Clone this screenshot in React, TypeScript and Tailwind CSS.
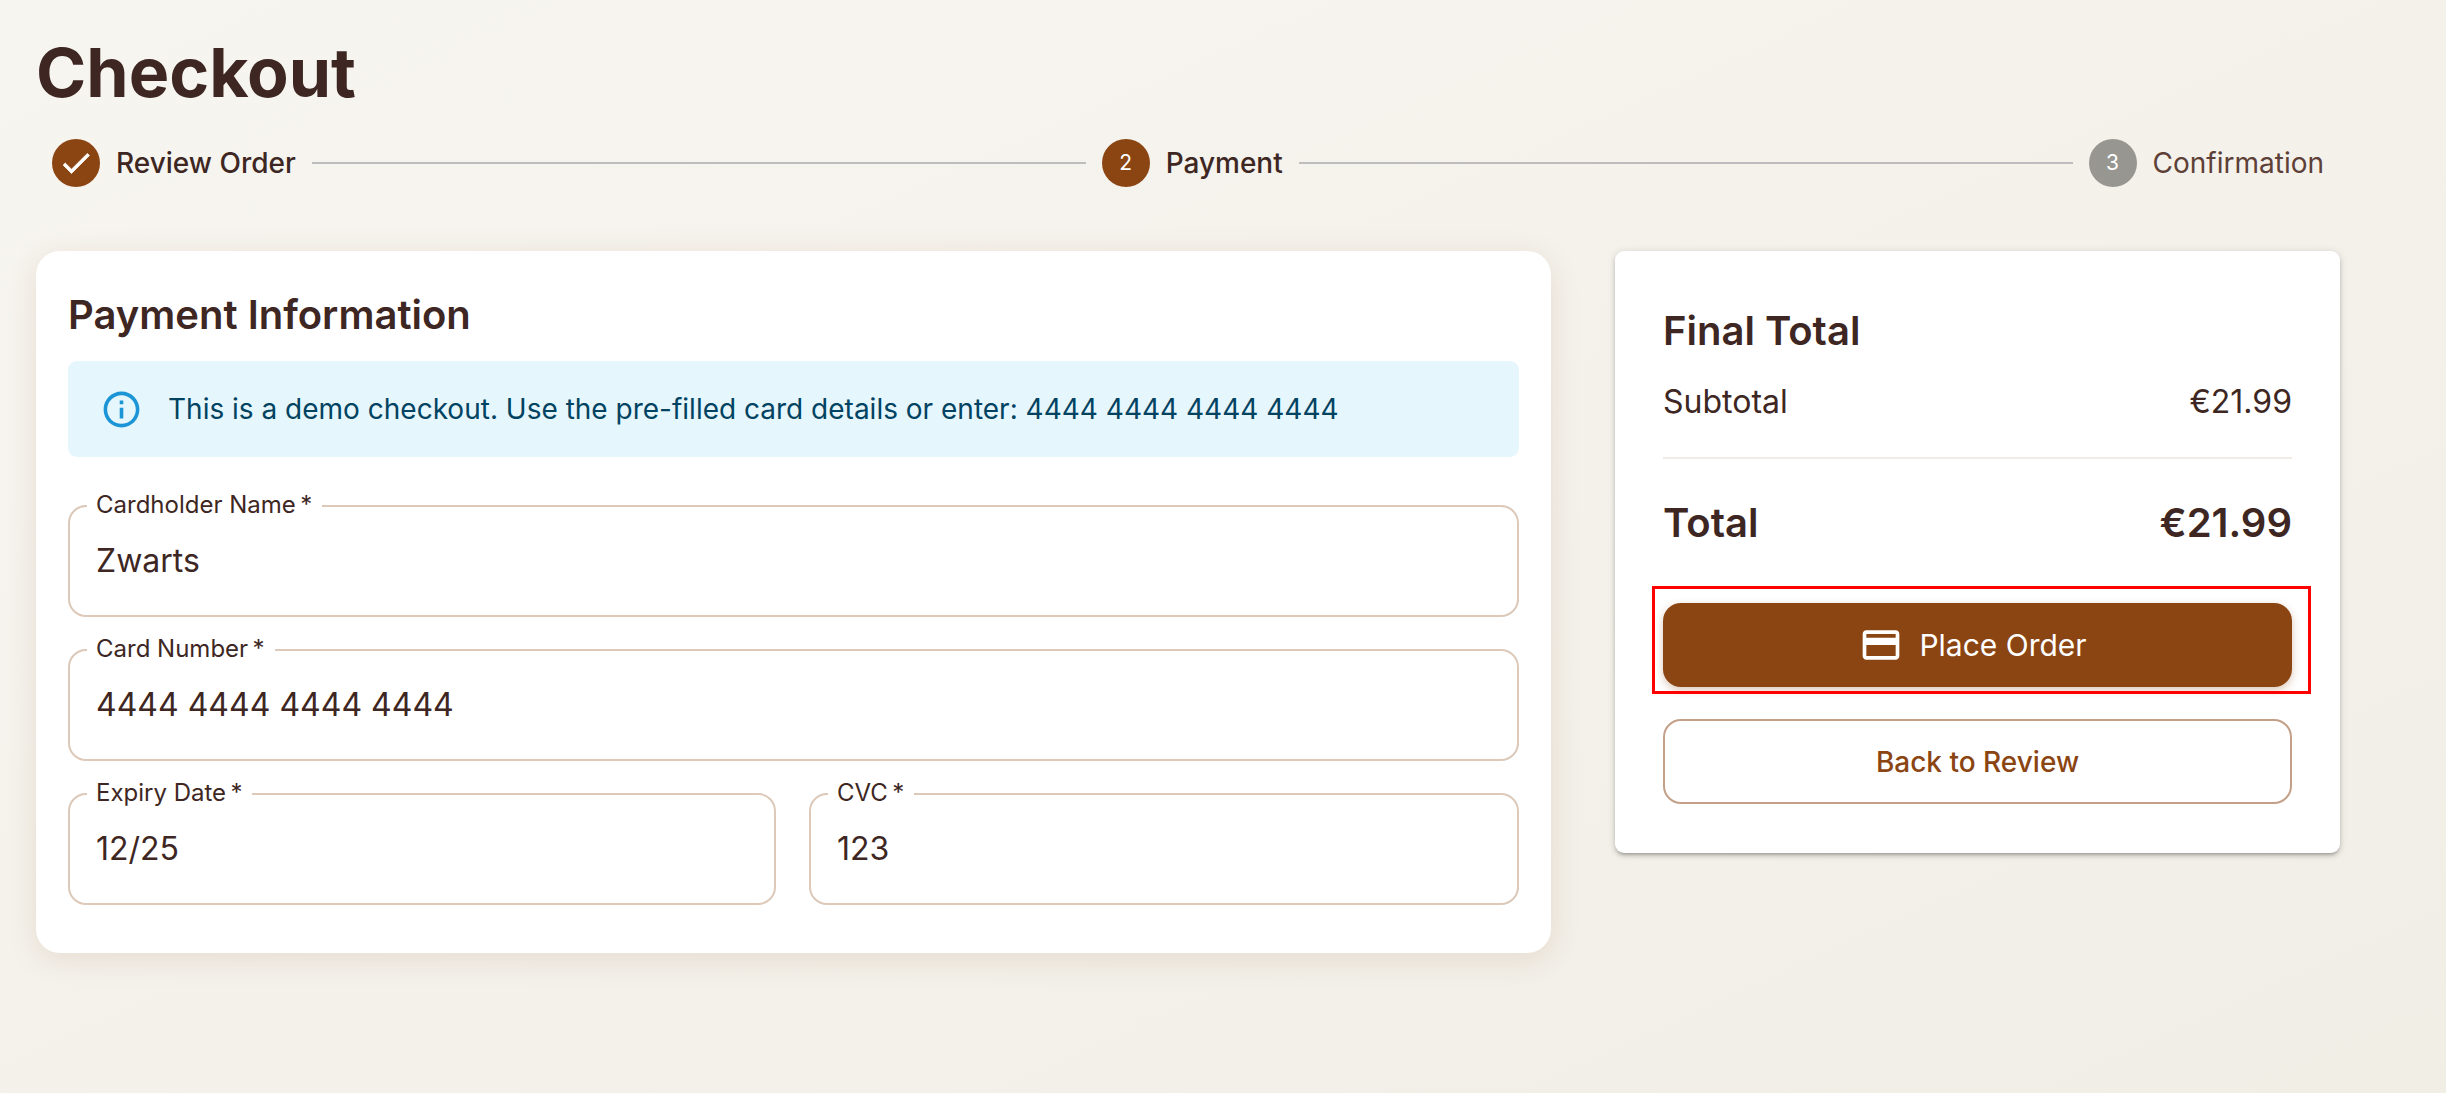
const font = 'font-["Inter",sans-serif]'

function Step({ label, state, n }: { label: string; state: 'done' | 'active' | 'todo'; n?: number }) {
  return (
    <div className="flex items-center shrink-0">
      <div
        className={`w-[48px] h-[48px] rounded-full flex items-center justify-center text-white text-[21px] ${
          state === 'todo' ? 'bg-[#979691]' : 'bg-[#8b4513]'
        }`}
      >
        {state === 'done' ? (
          <svg viewBox="0 0 24 24" className="w-[36px] h-[36px]" fill="currentColor" stroke="currentColor" strokeWidth={0.5}>
            <path d="M9 16.17 4.83 12l-1.42 1.41L9 19 21 7l-1.41-1.41z" />
          </svg>
        ) : (
          n
        )}
      </div>
      <span
        className={`ml-[16px] text-[28px] leading-[40px] ${
          state === 'todo' ? 'text-[#5d4037]' : 'text-[#3e2723] font-medium'
        }`}
      >
        {label}
      </span>
    </div>
  )
}

function Field({ label, value, className = '' }: { label: string; value: string; className?: string }) {
  return (
    <div className={`relative h-[112px] rounded-[18px] border-2 border-[#dcc9b9] px-[26px] flex items-center ${className}`}>
      <span className="absolute left-[17px] -top-[18px] bg-white pl-[9px] pr-[10px] text-[24px] leading-[32px] text-[#3e2723]">
        {label}
        {'\u2009*'}
      </span>
      <span className="text-[32px] text-[#3e2723]">{value}</span>
    </div>
  )
}

export default function App() {
  return (
    <div className={`min-h-[1093px] bg-gradient-to-br from-[#f7f5f0] to-[#f1eee6] px-[36px] pt-[24px] ${font}`}>
      <h1 className="text-[68px] leading-[96px] font-bold text-[#3e2723]">Checkout</h1>

      <div className="flex items-center w-[2304px] px-[16px] h-[48px] mt-[19px]">
        <Step label="Review Order" state="done" />
        <div className="flex-1 h-[2px] bg-[#bdbdbd] mx-[16px]" />
        <Step label="Payment" state="active" n={2} />
        <div className="flex-1 h-[2px] bg-[#bdbdbd] mx-[16px]" />
        <Step label="Confirmation" state="todo" n={3} />
      </div>

      <div className="flex items-start gap-[64px] mt-[64px] w-[2304px]">
        <div className="w-[1515px] h-[702px] bg-white rounded-[24px] shadow-[0_6px_30px_rgba(139,69,19,0.12)] p-[32px]">
          <h2 className="text-[40px] leading-[60px] font-semibold text-[#3e2723] mt-[2px]">Payment Information</h2>
          <div className="mt-[16px] h-[96px] rounded-[9px] bg-[#e5f6fd] flex items-center pl-[32px]">
            <svg viewBox="0 0 24 24" className="w-[43px] h-[43px]" fill="#1b95d6">
              <path d="M11 7h2v2h-2zm0 4h2v6h-2zm1-9C6.48 2 2 6.48 2 12s4.48 10 10 10 10-4.48 10-10S17.52 2 12 2zm0 18c-4.41 0-8-3.59-8-8s3.59-8 8-8 8 3.59 8 8-3.59 8-8 8z" />
            </svg>
            <span className="ml-[25px] text-[28px] text-[#014361]">
              This is a demo checkout. Use the pre-filled card details or enter: 4444 4444 4444 4444
            </span>
          </div>
          <div className="mt-[48px] flex flex-col gap-[32px]">
            <Field label="Cardholder Name" value="Zwarts" />
            <Field label="Card Number" value="4444 4444 4444 4444" />
            <div className="flex gap-[33px]">
              <Field label="Expiry Date" value="12/25" className="w-[708px]" />
              <Field label="CVC" value="123" className="flex-1" />
            </div>
          </div>
        </div>

        <div className="w-[725px] h-[602px] bg-white rounded-[9px] shadow-[0_3px_3px_-2px_rgba(0,0,0,0.2),0_3px_4px_rgba(0,0,0,0.14),0_1px_8px_rgba(0,0,0,0.12)] px-[48px] pt-[50px]">
          <h3 className="text-[40px] leading-[60px] font-semibold text-[#3e2723]">Final Total</h3>
          <div className="flex justify-between mt-[17px] text-[32px] leading-[48px] text-[#3e2723]">
            <span>Subtotal</span>
            <span>€21.99</span>
          </div>
          <div className="h-[2px] bg-[#f1ebe5] mt-[31px]" />
          <div className="flex justify-between mt-[34px] text-[40px] leading-[60px] font-semibold text-[#3e2723]">
            <span>Total</span>
            <span>€21.99</span>
          </div>
          <div className="relative mt-[50px]">
            <button className="w-full h-[84px] rounded-[18px] bg-[#8b4513] text-white text-[30px] flex items-center justify-center shadow-[0_3px_8px_rgba(139,69,19,0.3)]">
              <svg viewBox="0 0 24 24" className="w-[44px] h-[44px] mr-[16px] ml-[-9px]" fill="currentColor">
                <path d="M20 4H4c-1.11 0-1.99.89-1.99 2L2 18c0 1.11.89 2 2 2h16c1.11 0 2-.89 2-2V6c0-1.11-.89-2-2-2zm0 14H4v-6h16v6zm0-10H4V6h16v2z" />
              </svg>
              Place Order
            </button>
            <div className="absolute -left-[11px] -right-[19px] -top-[17px] -bottom-[7px] border-[3px] border-[#ff0000] pointer-events-none" />
          </div>
          <button className="w-full h-[85px] mt-[32px] rounded-[18px] border-2 border-[#c4a088] text-[#8b4513] text-[28px] font-medium">
            Back to Review
          </button>
        </div>
      </div>
    </div>
  )
}
